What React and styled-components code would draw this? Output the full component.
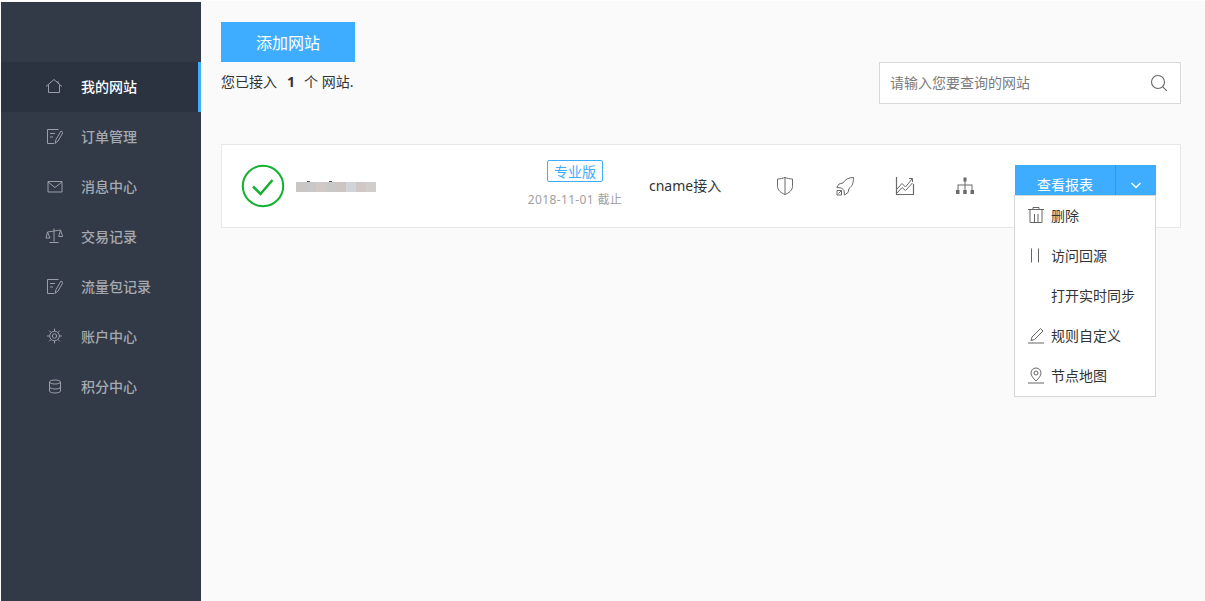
import React from "react";
import styled, { createGlobalStyle } from "styled-components";

const Global = createGlobalStyle`
  html, body { margin: 0; padding: 0; background: #fafafa; }
  * { box-sizing: border-box; }
  body { font-family: "Noto Sans", "Noto Sans CJK SC", sans-serif; color: #333; }
`;

const Page = styled.div`
  width: 1205px; height: 601px; display: flex; overflow: hidden;
  padding: 1px 0 0 1px; background: #fafafa; border-top: 1px solid #fff;
`;
const Sidebar = styled.nav`
  width: 200px; flex: none; background: #323a48; padding-top: 60px;
`;
const NavRow = styled.div`
  height: 50px; display: flex; align-items: center; padding: 0 0 2px 44px;
  font-size: 14px; font-weight: 500;
  color: ${p => (p.$active ? "#fff" : "#a5a9b0")};
  background: ${p => (p.$active ? "#2c3340" : "transparent")};
  border-right: 3px solid ${p => (p.$active ? "#3fadff" : "transparent")};
`;
const NavIcon = styled.span`
  width: 18px; height: 18px; margin-right: 18px; display: flex; color: #9a9ea6;
  svg { width: 18px; height: 18px; }
`;
const Main = styled.main`
  flex: 1; padding: 20px 24px 0 20px; position: relative;
`;
const TopBar = styled.div`
  display: flex; justify-content: space-between; align-items: flex-start; height: 122px;
`;
const AddButton = styled.div`
  width: 134px; height: 40px; background: #3fadff; color: #fff; font-size: 16px;
  display: flex; align-items: center; justify-content: center;
`;
const Summary = styled.div`
  font-size: 14px; line-height: 20px; margin-top: 10px; color: #333; display: flex; white-space: pre;
  b { font-size: 14px; font-weight: 700; margin: 0 9px 0 10px; }
`;
const Search = styled.div`
  width: 302px; height: 42px; margin-top: 40px; background: #fff; border: 1px solid #d9d9d9;
  display: flex; align-items: center; justify-content: space-between; padding: 0 12px 2px 10px;
  font-size: 14px; color: #7b7b7b;
  svg { width: 18px; height: 18px; color: #666; margin-top: 2px; }
`;
const Card = styled.section`
  width: 960px; height: 84px; background: #fff; border: 1px solid #e8e8e8;
  display: flex; align-items: center; position: relative;
`;
const Status = styled.span`
  width: 44px; height: 44px; margin-left: 19px; flex: none; color: #13b12f; display: flex;
  svg { width: 44px; height: 44px; }
`;
const Blurred = styled.div`
  width: 80px; height: 10px; margin-left: 11px; margin-top: 2px; flex: none; display: flex; position: relative;
`;
const BlurCell = styled.i`
  flex: 1; display: block; background: ${p => p.$c};
`;
const Speck = styled.i`
  position: absolute; top: -1px; left: ${p => p.$x}px; width: 3px; height: 1px; background: #555;
`;
const Plan = styled.div`
  width: 120px; margin-left: 139px; display: flex; flex-direction: column; align-items: center; margin-top: -3px;
`;
const Badge = styled.span`
  height: 22px; width: 56px; border: 1px solid #3fadff; border-radius: 2px; color: #3fadff;
  font-size: 14px; display: flex; align-items: center; justify-content: center;
`;
const Expiry = styled.span`
  font-size: 12px; color: #a0a0a0; margin-top: 9px; line-height: 18px; white-space: nowrap; letter-spacing: .35px;
`;
const Access = styled.div`
  font-size: 14px; color: #333; margin-left: 14px; width: 100px; white-space: nowrap; padding-bottom: 2px;
`;
const Tools = styled.div`
  display: flex; margin-left: 26px; gap: 40px; margin-top: -1px;
`;
const Tool = styled.span`
  width: 20px; height: 20px; color: #6a6a6a; display: flex;
  svg { width: 20px; height: 20px; }
`;
const ReportGroup = styled.div`
  position: absolute; left: 793px; top: 20px; width: 141px; height: 31px; background: #3fadff;
  color: #fff; display: flex; font-size: 14px;
`;
const ReportMain = styled.div`
  width: 101px; display: flex; align-items: center; justify-content: center; padding-top: 9px;
  border-right: 1px solid #2f9be8; line-height: 1;
`;
const ReportCaret = styled.div`
  flex: 1; display: flex; align-items: center; justify-content: center; padding-top: 8px;
  svg { width: 12px; height: 12px; }
`;
const Menu = styled.div`
  position: absolute; left: 792px; top: 50px; width: 142px; height: 202px; z-index: 2;
  background: #fff; border: 1px solid #d6d6d6; padding: 0;
`;
const MenuRow = styled.div`
  height: 40px; display: flex; align-items: center; padding: 0 0 2px 12px; font-size: 14px; color: #333;
`;
const MenuIcon = styled.span`
  width: 18px; height: 18px; margin-right: 6px; display: flex; color: #666;
  svg { width: 18px; height: 18px; }
`;

const S = p => <svg viewBox="0 0 18 18" fill="none" stroke="currentColor" strokeWidth="1" {...p} />;

const HomeIcon = () => <S><path d="M1 9.500 9 2.500l8 7M3.500 8v7.500h11V8M13 4v2.500" /></S>;
const NoteIcon = () => <S><path d="M13.500 2.500H2.500v14H9M5 6.500h5M5 10h3M10 16.500l1-4 5-8.500 2 1.500-5 8.500z" /></S>;
const MailIcon = () => <S><path d="M3 4.500h14v10.500H3zM3 5l7 5.500L17 5" /></S>;
const ScaleIcon = () => <S><path d="M9 1.500v13M4.500 15.500h9M2.500 5l13-2M2.500 5 1 11h4zM15.500 3l-1.800 6.500h4z" /></S>;
const GearIcon = () => <S><circle cx="9.500" cy="9" r="2.200" /><circle cx="9.500" cy="9" r="4.800" /><path d="M9.500 1.500v2.700M9.500 13.800v2.700M2 9h2.700M14.300 9H17M4.200 3.700l1.900 1.900M12.900 12.400l1.900 1.900M4.200 14.300l1.900-1.900M12.900 5.600l1.900-1.900" /></S>;
const DbIcon = () => <S><ellipse cx="10" cy="5" rx="5.500" ry="2" /><path d="M4.500 5v9c0 1.100 2.500 2 5.500 2s5.500-.9 5.500-2V5M4.500 10c0 1.100 2.500 2 5.500 2s5.500-.9 5.500-2" /></S>;

const nav = [
  ["我的网站", HomeIcon, true],
  ["订单管理", NoteIcon],
  ["消息中心", MailIcon],
  ["交易记录", ScaleIcon],
  ["流量包记录", NoteIcon],
  ["账户中心", GearIcon],
  ["积分中心", DbIcon],
];

const blur = ["#c9c6c5","#c8c8c8","#d0c9c5","#c9c8c8","#cdc5c2","#d1d5d9","#cfc8c6","#d1cdcc"];

export default function App() {
  return (
    <Page>
      <Global />
      <Sidebar>
        {nav.map(([label, Icon, active]) => (
          <NavRow key={label} $active={active}>
            <NavIcon><Icon /></NavIcon>
            {label}
          </NavRow>
        ))}
      </Sidebar>
      <Main>
        <TopBar>
          <div>
            <AddButton>添加网站</AddButton>
            <Summary>您已接入<b>1</b>个 网站.</Summary>
          </div>
          <Search>
            请输入您要查询的网站
            <svg viewBox="0 0 18 18" fill="none" stroke="currentColor" strokeWidth="1.100"><circle cx="8" cy="8" r="6.500" /><path d="m12.800 12.800 4 4" /></svg>
          </Search>
        </TopBar>
        <Card>
          <Status>
            <svg viewBox="0 0 44 44" fill="none" stroke="currentColor"><circle cx="22" cy="22" r="20.200" strokeWidth="2" /><path d="m12 22.500 7.500 7.500L31.500 16" strokeWidth="2.500" /></svg>
          </Status>
          <Blurred>
            {blur.map((c, i) => <BlurCell key={i} $c={c} />)}
            <Speck $x={11} />
            <Speck $x={33} />
          </Blurred>
          <Plan>
            <Badge>专业版</Badge>
            <Expiry>2018-11-01 截止</Expiry>
          </Plan>
          <Access>cname接入</Access>
          <Tools>
            <Tool>
              <svg viewBox="0 0 20 20" fill="none" stroke="currentColor"><path d="M2.500 3C5 3 8 2.300 10 1.500c2 .8 5 1.500 7.500 1.500v7.500c0 3.500-3.500 6.500-7.500 8-4-1.500-7.500-4.500-7.500-8zM10 1.500v17" /></svg>
            </Tool>
            <Tool>
              <svg viewBox="0 0 20 20" fill="none" stroke="currentColor"><path d="M18.500 1.500c-5 0-8.500 2-10.500 5.500L4 8 1.800 11.500l4.700.5 2.500 2.500.5 4.500 3.500-2.500 1-4c3.500-2.500 4.500-6 4.500-11zM2 14.500h4.500V19H2zM6.500 14.500 3.500 17.500" /></svg>
            </Tool>
            <Tool>
              <svg viewBox="0 0 20 20" fill="none" stroke="currentColor"><path d="M1.500 1v17.500h17V8" strokeWidth="1.200"/><path d="m2 13 5-5.500 3.500 3.500 6.500-8M14 2.500h3.500V6M2 17l5-5.500 3.500 3 7-7.500" /></svg>
            </Tool>
            <Tool>
              <svg viewBox="0 0 20 20" fill="currentColor"><path d="M8.500 1.500h3v4h-3zM9.500 5h1v4h-1zM2.500 8.500h15v1h-15zM2.500 9h1v5h-1zM9.500 9h1v5h-1zM16.500 9h1v5h-1zM1 14h3.500v4H1zM8.200 14h3.500v4H8.200zM15.500 14H19v4h-3.500z" /></svg>
            </Tool>
          </Tools>
          <ReportGroup>
            <ReportMain>查看报表</ReportMain>
            <ReportCaret>
              <svg viewBox="0 0 12 12" fill="none" stroke="currentColor" strokeWidth="1.300"><path d="m1.500 4 4.500 4.500L10.500 4" /></svg>
            </ReportCaret>
          </ReportGroup>
          <Menu>
            <MenuRow>
              <MenuIcon><S><path d="M1 3.500h16M6 3.500V1.500h6v2M3 3.500v13h12v-13M7.500 8v8.500M11 8v8.500" /></S></MenuIcon>
              删除
            </MenuRow>
            <MenuRow>
              <MenuIcon><S><path d="M4.500 2.500v14M11.500 2.500v14" /></S></MenuIcon>
              访问回源
            </MenuRow>
            <MenuRow>
              <MenuIcon />
              打开实时同步
            </MenuRow>
            <MenuRow>
              <MenuIcon><S><path d="M1 17h16M4 14.500l1-3.500 8.500-8.500 2.500 2.500-8.500 8.500z" /></S></MenuIcon>
              规则自定义
            </MenuRow>
            <MenuRow>
              <MenuIcon><S><path d="M1 17h16M9 15c-3-3-5-5.500-5-8a5 5 0 0 1 10 0c0 2.500-2 5-5 8z" /><circle cx="9" cy="7" r="2" /></S></MenuIcon>
              节点地图
            </MenuRow>
          </Menu>
        </Card>
      </Main>
    </Page>
  );
}
